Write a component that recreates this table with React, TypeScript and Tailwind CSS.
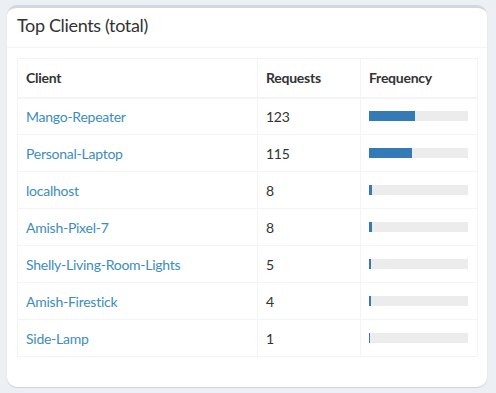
const clients = [
  { name: "Mango-Repeater", count: 123 },
  { name: "Personal-Laptop", count: 115 },
  { name: "localhost", count: 8 },
  { name: "Amish-Pixel-7", count: 8 },
  { name: "Shelly-Living-Room-Lights", count: 5 },
  { name: "Amish-Firestick", count: 4 },
  { name: "Side-Lamp", count: 1 },
];

const total = clients.reduce((s, c) => s + c.count, 0);

export default function App() {
  return (
    <div className="min-h-[393px] w-[496px] bg-[#ecf0f5] pt-[5px] pl-[7px] font-['Lato',sans-serif] text-[#333]">
      <div className="w-[480px] rounded-[10px] border-t-[3px] border-[#d2d6de] bg-white shadow-[0_1px_1px_rgba(0,0,0,0.12)]">
        <div className="h-[40px] border-b border-[#f4f4f4] px-[10px] pt-[5px] text-[18px] leading-[24px] tracking-[-0.35px]">
          Top Clients (total)
        </div>
        <div className="px-[10px] pt-[10px] pb-[30px]">
          <table className="w-[460px] table-fixed border-collapse border border-[#f4f4f4] text-[14px] tracking-[-0.25px]">
            <colgroup>
              <col className="w-[240px]" />
              <col className="w-[103px]" />
              <col className="w-[117px]" />
            </colgroup>
            <thead>
              <tr className="h-[39px] border-b-2 border-[#f4f4f4]">
                <th className="border-r border-[#f4f4f4] px-[8px] text-left font-bold">Client</th>
                <th className="border-r border-[#f4f4f4] px-[8px] text-left font-bold">Requests</th>
                <th className="px-[8px] text-left font-bold">Frequency</th>
              </tr>
            </thead>
            <tbody>
              {clients.map((c) => (
                <tr key={c.name} className="h-[37px] border-t border-[#f4f4f4]">
                  <td className="border-r border-[#f4f4f4] px-[8px] text-[#3c8dbc]">{c.name}</td>
                  <td className="border-r border-[#f4f4f4] px-[8px]">{c.count}</td>
                  <td className="px-[8px]">
                    <div className="h-[10px] w-[99px] bg-[#ececec]">
                      <div
                        className="h-full bg-[#337ab7]"
                        style={{ width: `${(c.count / total) * 100}%` }}
                      />
                    </div>
                  </td>
                </tr>
              ))}
            </tbody>
          </table>
        </div>
      </div>
    </div>
  );
}
